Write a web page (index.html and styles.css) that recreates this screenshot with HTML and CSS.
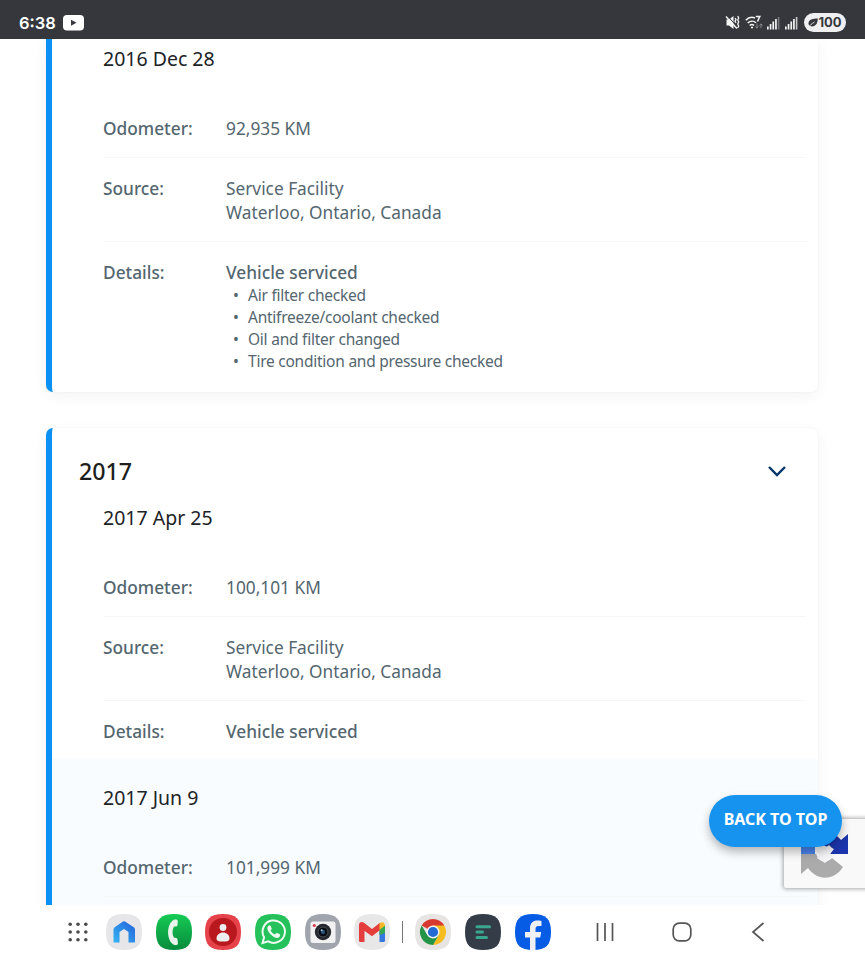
FILE: index.html
```
<!DOCTYPE html>
<html lang="en">
  <head>
    <meta charset="UTF-8" />
    <meta name="viewport" content="width=device-width, initial-scale=1.0" />
    <title>Vehicle history</title>
    <link rel="stylesheet" href="styles.css">
  </head>
  <body>
    <div class="screen">
      <header class="status-bar">
        <span class="clock">6:38</span>
        <svg class="youtube" width="21" height="16" viewBox="0 0 21 16">
          <rect width="21" height="15.5" rx="4" fill="#fff" />
          <path d="M8 4.8v6l5.5-3z" fill="#35373c" />
        </svg>
        <div class="status-icons">
          <svg width="15" height="15" viewBox="0 0 15 15" fill="none" stroke="#f4f4f4">
            <path d="M1.500 4.500h2.500l4.500-3.500v13L4 10.500H1.500z" fill="#f4f4f4" stroke="none" />
            <path d="M2 .5l11 12" stroke="#35373c" stroke-width="1" />
            <path d="M1 1.500l11 12" stroke-width="1.500" />
            <path d="M10 3l1 1.500-1 1.700 1 1.700M12.700 1l1 2-1 2 1 2-1 2 1 2-1 2" stroke-width="1.300" />
          </svg>
          <svg class="wifi" width="19" height="15" viewBox="0 0 19 15" fill="none" stroke="#f4f4f4" stroke-width="1.500">
            <path d="M.8 5.300C3.300 2.500 7 1.800 10 3M2.700 8c2.500-2.300 6-2.300 8.300-.3M4.700 10.500c1.500-1.200 3-1.200 4.400 0" />
            <circle cx="7" cy="12.500" r="1.100" fill="#f4f4f4" stroke="none" />
            <path d="M10.800 1.500h4l-2.300 5" />
            <path d="M12 8.500v4.500m-1.500-1.500L12 13.200l1.500-1.700M16 13.200V9m-1.500 1.500L16 8.800l1.500 1.700" stroke="#85878b" stroke-width="1" />
          </svg>
          <svg class="signal" width="13" height="14" viewBox="0 0 13 14" fill="#f4f4f4">
            <path d="M0 10.500h1.700v3H0zM2.700 8h1.700v5.500H2.700zM5.400 5.500h1.700v8H5.400zM8.100 3h1.700v10.500H8.100z" />
            <path d="M10.800 1h1.600v12.500h-1.600z" fill="#77797d" />
          </svg>
          <svg class="signal" width="13" height="14" viewBox="0 0 13 14" fill="#f4f4f4">
            <path d="M0 10.500h1.700v3H0zM2.700 8h1.700v5.500H2.700zM5.400 5.500h1.700v8H5.400zM8.100 3h1.700v10.500H8.100z" />
            <path d="M10.800 1h1.600v12.500h-1.600z" fill="#c5c6c8" />
          </svg>
          <span class="battery">
            <svg width="10" height="10" viewBox="0 0 10 10">
              <path d="M9.800.5C5 .7.500 1.300.500 5.300c0 1 .3 1.700.8 2.200C5.500 10 9.800 7 9.800.5z" fill="#35373c" />
              <path d="M.5 9.500C2 7 4 5.500 6.500 4" fill="none" stroke="#f0f0f2" stroke-width=".9" />
            </svg>100
          </span>
        </div>
      </header>

      <main class="page">
        <section class="card card-top">
          <article class="record">
            <h3 class="date">2016 Dec 28</h3>
            <dl class="rows">
              <div class="row"><dt>Odometer:</dt><dd>92,935 KM</dd></div>
              <div class="row"><dt>Source:</dt><dd>Service Facility<br>Waterloo, Ontario, Canada</dd></div>
              <div class="row">
                <dt>Details:</dt>
                <dd>
                  <strong>Vehicle serviced</strong>
                  <ul class="services">
                    <li>Air filter checked</li>
                    <li>Antifreeze/coolant checked</li>
                    <li>Oil and filter changed</li>
                    <li>Tire condition and pressure checked</li>
                  </ul>
                </dd>
              </div>
            </dl>
          </article>
        </section>

        <section class="card card-year">
          <div class="year">
            <h2>2017</h2>
            <svg width="20" height="12" viewBox="0 0 20 12">
              <path d="M2 2l8 8 8-8" fill="none" stroke="#073567" stroke-width="2.400" />
            </svg>
          </div>
          <article class="record">
            <h3 class="date">2017 Apr 25</h3>
            <dl class="rows">
              <div class="row"><dt>Odometer:</dt><dd>100,101 KM</dd></div>
              <div class="row"><dt>Source:</dt><dd>Service Facility<br>Waterloo, Ontario, Canada</dd></div>
              <div class="row"><dt>Details:</dt><dd><strong>Vehicle serviced</strong></dd></div>
            </dl>
          </article>
          <article class="record record-alt">
            <h3 class="date">2017 Jun 9</h3>
            <dl class="rows">
              <div class="row"><dt>Odometer:</dt><dd>101,999 KM</dd></div>
              <div class="row"></div>
            </dl>
          </article>
        </section>

        <div class="recaptcha">
          <svg width="50" height="50" viewBox="0 0 50 50">
            <path d="M2 26V11l6 5C13 8 19 4 26 4v14H16v8z" fill="#4a83ec" />
            <path d="M26 4c7 0 12 3 16 8l7-6v20H31l4-5-9-3z" fill="#1d35ac" />
            <path d="M2 26h15l2 4c4 5 10 4 14 0l11 9c-9 14-26 14-35 1l-7 6z" fill="#ababab" />
            <path d="M17 21l6-3 3 2 4-3 4 4-3 5 1 4-6 5-8-5 2-4z" fill="#f4f4f6" />
          </svg>
        </div>
        <a class="back-to-top" href="#">BACK TO TOP</a>
      </main>

      <nav class="taskbar">
        <svg class="app-drawer" width="20" height="20" viewBox="0 0 20 20" fill="#4c4c4c">
          <circle cx="2.200" cy="2.200" r="1.800" /><circle cx="10" cy="2.200" r="1.800" /><circle cx="17.800" cy="2.200" r="1.800" />
          <circle cx="2.200" cy="10" r="1.800" /><circle cx="10" cy="10" r="1.800" /><circle cx="17.800" cy="10" r="1.800" />
          <circle cx="2.200" cy="17.800" r="1.800" /><circle cx="10" cy="17.800" r="1.800" /><circle cx="17.800" cy="17.800" r="1.800" />
        </svg>
        <div class="apps">
          <svg class="app" viewBox="0 0 36 36">
            <defs>
              <linearGradient id="home" x1="0" y1="1" x2="1" y2="0">
                <stop offset="0" stop-color="#35b5f4" />
                <stop offset="1" stop-color="#2361d8" />
              </linearGradient>
            </defs>
            <path d="M18 0C31 0 36 5 36 18S31 36 18 36 0 31 0 18 5 0 18 0z" fill="#e6e6e8" />
            <path d="M7.500 28.500V15.500Q7.500 14 8.700 13.200L17 7.500Q18 6.800 19 7.500L27.800 13.200Q29 14 29 15.500v13h-6.500V18L18 15 13.500 18v10.500z" fill="url(#home)" />
          </svg>
          <svg class="app" viewBox="0 0 36 36">
            <defs>
              <linearGradient id="phone" x1="0" y1="0" x2="0" y2="1">
                <stop offset="0" stop-color="#16cb54" />
                <stop offset="1" stop-color="#078b3c" />
              </linearGradient>
            </defs>
            <path d="M18 0C31 0 36 5 36 18S31 36 18 36 0 31 0 18 5 0 18 0z" fill="url(#phone)" />
            <path d="M18.500 5.500c-8.500 3.500-8.500 22 0 25.500h2c1 0 1.500-1 1.400-2l-.4-3.500c-.1-1-1-1.700-2-1.700h-1.500c-2-3-2-8 0-11.200h1.500c1 0 1.800-.7 2-1.700l.3-3.400c.1-1-.5-2-1.400-2z" fill="#ebf3ed" />
          </svg>
          <svg class="app" viewBox="0 0 36 36">
            <path d="M18 0C31 0 36 5 36 18S31 36 18 36 0 31 0 18 5 0 18 0z" fill="#e5424b" />
            <circle cx="18" cy="18" r="14" fill="#b9181e" />
            <circle cx="18" cy="13.500" r="3.400" fill="#eee" />
            <path d="M11.500 24.500c0-3.500 3-6 6.500-6s6.500 2.500 6.500 6c0 2.500-2 3-6.500 3s-6.500-.5-6.500-3z" fill="#eee" />
          </svg>
          <svg class="app" viewBox="0 0 36 36">
            <path d="M18 0C31 0 36 5 36 18S31 36 18 36 0 31 0 18 5 0 18 0z" fill="#25c15b" />
            <path d="M7.500 29l1.600-5.700A11.200 11.200 0 1 1 13.300 27.400z" fill="none" stroke="#eefaf1" stroke-width="2" />
            <path d="M14 11.500c-3 1.800-1.500 5.500 1.500 8.700 3.500 3.600 8 5.300 9.500 1.800.4-1.100 0-1.500-.7-1.900l-2-1c-.7-.3-1.100-.1-1.500.5l-.8 1c-2-.7-3.500-2.100-4.400-4 1.500-1.500 1.200-1.800.8-2.800l-.7-1.700c-.3-.7-1-.9-1.700-.6z" fill="#eefaf1" />
          </svg>
          <svg class="app" viewBox="0 0 36 36">
            <path d="M18 0C31 0 36 5 36 18S31 36 18 36 0 31 0 18 5 0 18 0z" fill="#a0a5ad" />
            <rect x="5.500" y="7.500" width="25" height="21.500" rx="2.500" fill="#f1f1f2" />
            <circle cx="9.300" cy="11.500" r="1.600" fill="#dc3f51" />
            <circle cx="18" cy="18" r="8.200" fill="#24272b" />
            <circle cx="18" cy="18" r="5" fill="#080b12" stroke="#4b4f55" />
            <circle cx="18" cy="18" r="2.200" fill="#244d72" />
            <circle cx="16.700" cy="16.300" r="1" fill="#a9cce5" />
          </svg>
          <svg class="app" viewBox="0 0 36 36">
            <path d="M18 0C31 0 36 5 36 18S31 36 18 36 0 31 0 18 5 0 18 0z" fill="#e8e7e8" />
            <path d="M5 11v15.500c0 1 .6 1.500 1.500 1.500h4V16z" fill="#e33d3f" />
            <path d="M25.500 16v12h4c1 0 1.500-.6 1.500-1.500V18z" fill="#3478dd" />
            <path d="M25.500 14.500l5.500-3V19l-5.500 2z" fill="#35a853" />
            <path d="M5 11c0-3 3-3.800 5-2.200l8 6.200 8-6.200V16l-8 6.300L5 13z" fill="#e53d3c" />
            <path d="M25.500 9.200C28 7.200 31 8.500 31 11.500L25.500 16z" fill="#f4b929" />
          </svg>
        </div>
        <span class="divider"></span>
        <div class="apps">
          <svg class="app" viewBox="0 0 36 36">
            <path d="M18 0C31 0 36 5 36 18S31 36 18 36 0 31 0 18 5 0 18 0z" fill="#e6e5e4" />
            <path d="M18 18L6.740 11.500A13 13 0 0 1 29.260 11.500z" fill="#d93a2f" />
            <path d="M18 11.500h11.260A13 13 0 0 1 18 31l5.630-9.750z" fill="#f5bd20" />
            <path d="M12.370 21.250L6.740 11.500A13 13 0 0 0 18 31l5.630-9.750z" fill="#249447" />
            <circle cx="18" cy="18" r="6.500" fill="#f4f6f7" />
            <circle cx="18" cy="18" r="5.100" fill="#236bd3" />
          </svg>
          <svg class="app" viewBox="0 0 36 36">
            <path d="M18 0C31 0 36 5 36 18S31 36 18 36 0 31 0 18 5 0 18 0z" fill="#343d47" />
            <path d="M12 12.800h12.500M12 18h5.500M12 23.500h9.500" stroke="#39a78d" stroke-width="3" stroke-linecap="round" />
          </svg>
          <svg class="app" viewBox="0 0 36 36">
            <path d="M18 0C31 0 36 5 36 18S31 36 18 36 0 31 0 18 5 0 18 0z" fill="#075ce5" />
            <path d="M15 36V23.500h-5V18h5v-3.500c0-5.500 3-8 7.500-8 1.500 0 2.800.1 4 .4V12h-2.700c-2.500 0-3.300 1-3.300 3.200V18h5.700l-1 5.500h-4.700V36z" fill="#eef0f4" />
          </svg>
        </div>
        <div class="nav-buttons">
          <svg width="20" height="20" viewBox="0 0 20 20"><path d="M2.500 1v18M10 1v18M17.500 1v18" /></svg>
          <svg width="20" height="20" viewBox="0 0 20 20"><rect x="1.200" y="1.200" width="17.600" height="17.600" rx="6" /></svg>
          <svg width="20" height="20" viewBox="0 0 20 20"><path d="M15.500 1L5 10l10.500 9" /></svg>
        </div>
      </nav>
    </div>
  </body>
</html>
```

FILE: styles.css
```
* {
  padding: 0;
  margin: 0;
  box-sizing: border-box;
}
body {
  background: #fff;
  font-family: "Noto Sans", sans-serif;
  color: #54666f;
}
.screen {
  display: flex;
  flex-direction: column;
  height: 960px;
  overflow: hidden;
}

/* status bar */
.status-bar {
  display: flex;
  align-items: center;
  flex: 0 0 39px;
  padding: 6px 19px 0;
  background: #35373c;
  color: #fff;
}
.clock {
  width: 44px;
  font: 600 16.5px/20px Inter, sans-serif;
}
.status-icons {
  display: flex;
  align-items: center;
  margin-left: auto;
}
.wifi {
  margin-left: 5px;
}
.signal {
  margin-left: 5px;
}
.wifi + .signal {
  margin-left: 3px;
}
.battery {
  display: flex;
  align-items: center;
  justify-content: center;
  width: 42px;
  height: 19px;
  margin-left: 6px;
  border-radius: 10px;
  background: #f0f0f2;
  color: #35373c;
  font: 700 13px/19px Inter, sans-serif;
}

/* report */
.page {
  position: relative;
  flex: 1;
  min-height: 0;
  padding: 0 47px 0 46px;
  overflow: hidden;
}
.card {
  border-left: 6px solid #0b90f3;
  border-radius: 7px;
  background: #fff;
  box-shadow: 0 4px 14px rgba(0, 0, 0, 0.05), 0 0 2px rgba(0, 0, 0, 0.06);
  overflow: hidden;
}
.card-top {
  height: 353px;
  border-top-left-radius: 0;
  border-top-right-radius: 0;
}
.card-year {
  margin-top: 36px;
}
.year {
  display: flex;
  align-items: center;
  justify-content: space-between;
  padding: 25px 31px 0 27px;
}
.year h2 {
  font-size: 23.2px;
  font-weight: 500;
  line-height: 36px;
  color: #1c1e20;
}
.record {
  padding: 25px 12px 0 51px;
}
.card-top .record {
  padding-top: 6px;
}
.year + .record {
  padding-top: 15px;
}
.record-alt {
  background: #f8fcff;
}
.date {
  margin-bottom: 25px;
  font-size: 19.5px;
  font-weight: 400;
  line-height: 28px;
  color: #202326;
}
.row {
  display: flex;
  padding: 19px 0 15px;
  font-size: 17.3px;
  line-height: 24.5px;
}
.row + .row {
  border-top: 1px solid #f6f8f8;
}
.row dt {
  width: 123px;
  font-weight: 500;
}
.row strong {
  display: block;
  font-weight: 500;
}
.services {
  list-style: none;
  font-size: 15.5px;
  line-height: 21.9px;
  letter-spacing: -0.24px;
}
.services li {
  display: flex;
}
.services li::before {
  content: "•";
  width: 15px;
  padding-left: 7px;
}

.recaptcha {
  position: absolute;
  right: -4px;
  top: 780px;
  width: 85px;
  height: 69px;
  padding: 9px 15px;
  border-radius: 2px;
  background: #f9f9f9;
  box-shadow: 0 0 4px 1px rgba(0, 0, 0, 0.35);
}
.back-to-top {
  position: absolute;
  right: 23px;
  top: 756px;
  width: 133px;
  height: 52px;
  border-radius: 26px;
  background: #1593ef;
  box-shadow: 0 5px 10px rgba(0, 0, 0, 0.28);
  color: #fff;
  font-size: 16px;
  font-weight: 700;
  line-height: 48px;
  text-align: center;
  text-decoration: none;
  white-space: nowrap;
}

/* taskbar */
.taskbar {
  display: flex;
  align-items: center;
  flex: 0 0 55px;
  padding: 0 0 1px 68px;
  background: #fff;
}
.apps {
  display: flex;
  gap: 13.700px;
}
.app {
  width: 36px;
  height: 36px;
}
.app-drawer {
  margin-right: 18px;
}
.divider {
  width: 1px;
  height: 22px;
  margin: 0 12px;
  background: #777;
}
.nav-buttons {
  display: flex;
  gap: 56.500px;
  margin-left: 44.500px;
  fill: none;
  stroke: #555;
  stroke-width: 1.700;
}
```
